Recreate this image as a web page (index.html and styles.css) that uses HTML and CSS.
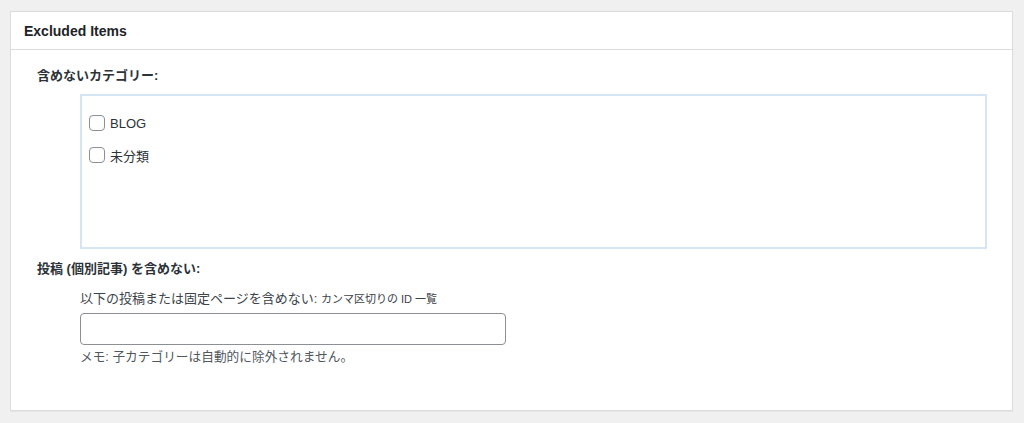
FILE: index.html
```html
<!doctype html>
<html lang="ja">
  <head>
    <meta charset="utf-8">
    <title>Excluded Items</title>
    <link rel="stylesheet" href="styles.css">
  </head>
  <body>
    <div class="postbox">
      <div class="postbox-header">
        <h2>Excluded Items</h2>
      </div>
      <div class="inside">
        <h4 class="field-title">含めないカテゴリー:</h4>
        <div class="cat-list">
          <label class="cat-item"><span class="checkbox"></span>BLOG</label>
          <label class="cat-item"><span class="checkbox"></span>未分類</label>
        </div>

        <h4 class="field-title second">投稿 (個別記事) を含めない:</h4>
        <div class="field">
          <label class="field-label">以下の投稿または固定ページを含めない: <small>カンマ区切りの ID 一覧</small></label>
          <input class="text-input" type="text">
          <p class="memo">メモ: 子カテゴリーは自動的に除外されません。</p>
        </div>
      </div>
    </div>
  </body>
</html>
```

FILE: styles.css
```css
body {
  margin: 0;
  padding: 11px 11px 13px 10px;
  background: #f0f0f1;
  color: #1d2327;
  font-family: "Liberation Sans", "Noto Sans CJK JP", sans-serif;
  font-size: 13px;
}
.postbox {
  background: #fff;
  border: 1px solid #dcdcde;
  box-shadow: 0 1px 1px rgba(0, 0, 0, 0.04);
}
.postbox-header {
  height: 37px;
  border-bottom: 1px solid #dcdcde;
  display: flex;
  align-items: center;
}
.postbox-header h2 {
  margin: 1px 0 0;
  padding: 0 13px;
  font-size: 14px;
  font-weight: bold;
  line-height: 20px;
}
.inside {
  padding: 16px 25px 44px 0;
}
.field-title {
  margin: 0;
  padding-left: 26px;
  font-size: 13px;
  font-weight: bold;
  line-height: 20px;
  color: #2c3338;
}
.field-title.second {
  margin-top: 10px;
}
.cat-list {
  margin: 8px 0 0 69px;
  padding: 11px 7px 0;
  border: 2px solid #d5e5f3;
  height: 140px;
}
.cat-item {
  display: flex;
  align-items: center;
  height: 32px;
  gap: 5px;
  color: #2c3338;
}
.checkbox {
  width: 14px;
  height: 14px;
  border: 1px solid #8c8f94;
  border-radius: 4px;
  background: #fff;
}
.field {
  margin: 11px 0 0 69px;
}
.field-label {
  display: block;
  line-height: 18px;
  color: #3c434a;
}
.field-label small {
  font-size: 11px;
}
.text-input {
  display: block;
  margin: 5px 0 0;
  width: 426px;
  height: 32px;
  box-sizing: border-box;
  border: 1px solid #8c8f94;
  border-radius: 4px;
  padding: 0 8px;
  font: inherit;
}
.memo {
  margin: 3px 0 0;
  font-size: 12.7px;
  line-height: 18px;
  color: #50575e;
}
```
